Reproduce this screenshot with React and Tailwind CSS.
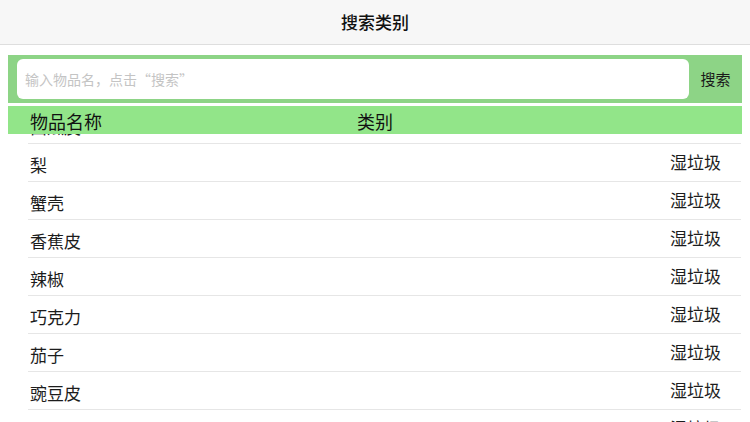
const items = [
    { name: '西瓜皮', type: '湿垃圾' },
    { name: '梨', type: '湿垃圾' },
    { name: '蟹壳', type: '湿垃圾' },
    { name: '香蕉皮', type: '湿垃圾' },
    { name: '辣椒', type: '湿垃圾' },
    { name: '巧克力', type: '湿垃圾' },
    { name: '茄子', type: '湿垃圾' },
    { name: '豌豆皮', type: '湿垃圾' },
    { name: '', type: '湿垃圾' },
];

const font = { fontFamily: '"Noto Sans CJK SC", "Noto Sans", sans-serif' };

const App = () => {
    return (
        <div className="h-[422px] w-[750px] overflow-hidden bg-white flex flex-col" style={font}>
            {/* nav bar */}
            <div className="h-[45px] shrink-0 flex items-center justify-center bg-[#f7f7f7] border-b border-[#dedede]">
                <p className="text-[17px] font-medium text-[#111]">搜索类别</p>
            </div>

            {/* search */}
            <div className="mx-2 mt-[10px] h-[48px] shrink-0 flex items-center bg-[#8dd486] pl-[9px]">
                <div className="flex-1 h-[40px] rounded-[6px] bg-white flex items-center px-2">
                    <span className="text-[14px] text-[#c4c4c4]">输入物品名，点击“搜索”</span>
                </div>
                <div className="w-[53px] text-center text-[15px] text-[#1a1a1a]">搜索</div>
            </div>

            {/* table head */}
            <div className="mx-2 mt-[3px] h-[28px] shrink-0 flex items-center bg-[#92e589] text-[18px] text-[#111]">
                <div className="w-[349px] pl-[22px] pt-[2px]">物品名称</div>
                <div className="pt-[2px]">类别</div>
            </div>

            {/* list */}
            <div className="flex-1 overflow-hidden">
                <div className="-mt-[28px] ml-[28px] mr-[9px]">
                    {items.map((item, i) => (
                        <div key={i} className="h-[38px] flex items-center justify-between border-b border-[#e6e6e6] pl-[2px] pr-[20px] text-[17px] text-[#1c1c1c]">
                            <span className="pt-[5px]">{item.name}</span>
                            <span className="pb-[1px]">{item.type}</span>
                        </div>
                    ))}
                </div>
            </div>
        </div>
    );
};

export default App;
